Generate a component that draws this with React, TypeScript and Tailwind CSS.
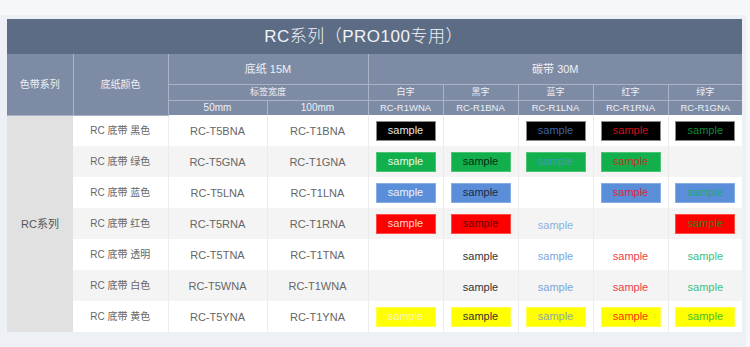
import React from 'react'

type Sample = { bg?: string; border?: string; color: string } | null

const FONT = "font-['Liberation_Sans','Noto_Sans_CJK_SC',sans-serif]"

// each row: paper colour label, 50mm code, 100mm code, 5 ribbon samples
const rows: { label: string; c50: string; c100: string; samples: Sample[] }[] = [
  {
    label: 'RC 底带 黑色',
    c50: 'RC-T5BNA',
    c100: 'RC-T1BNA',
    samples: [
      { bg: 'bg-black', border: 'border-[#8a8a8a]', color: 'text-[#e6e6e6]' },
      null,
      { bg: 'bg-black', border: 'border-[#8a8a8a]', color: 'text-[#3d62a8]' },
      { bg: 'bg-black', border: 'border-[#8a8a8a]', color: 'text-[#d0101a]' },
      { bg: 'bg-black', border: 'border-[#8a8a8a]', color: 'text-[#0c8a3a]' },
    ],
  },
  {
    label: 'RC 底带 绿色',
    c50: 'RC-T5GNA',
    c100: 'RC-T1GNA',
    samples: [
      { bg: 'bg-[#12b04c]', border: 'border-[#4cc478]', color: 'text-[#e8f6ec]' },
      { bg: 'bg-[#12b04c]', border: 'border-[#4cc478]', color: 'text-[#0a2a14]' },
      { bg: 'bg-[#12b04c]', border: 'border-[#4cc478]', color: 'text-[#3a9ac4]' },
      { bg: 'bg-[#12b04c]', border: 'border-[#4cc478]', color: 'text-[#c8302a]' },
      null,
    ],
  },
  {
    label: 'RC 底带 蓝色',
    c50: 'RC-T5LNA',
    c100: 'RC-T1LNA',
    samples: [
      { bg: 'bg-[#5b8ed8]', border: 'border-[#86aee4]', color: 'text-[#eef2fa]' },
      { bg: 'bg-[#5b8ed8]', border: 'border-[#86aee4]', color: 'text-[#1a2a48]' },
      null,
      { bg: 'bg-[#5b8ed8]', border: 'border-[#86aee4]', color: 'text-[#e0203c]' },
      { bg: 'bg-[#5b8ed8]', border: 'border-[#86aee4]', color: 'text-[#22a86a]' },
    ],
  },
  {
    label: 'RC 底带 红色',
    c50: 'RC-T5RNA',
    c100: 'RC-T1RNA',
    samples: [
      { bg: 'bg-[#ff0000]', border: 'border-[#ff4a4a]', color: 'text-[#ffd4d4]' },
      { bg: 'bg-[#ff0000]', border: 'border-[#ff4a4a]', color: 'text-[#6a0000]' },
      { color: 'text-[#8eb0e0]' },
      null,
      { bg: 'bg-[#ff0000]', border: 'border-[#ff4a4a]', color: 'text-[#3a7a1c]' },
    ],
  },
  {
    label: 'RC 底带 透明',
    c50: 'RC-T5TNA',
    c100: 'RC-T1TNA',
    samples: [
      null,
      { color: 'text-[#333333]' },
      { color: 'text-[#7ba5dc]' },
      { color: 'text-[#f0404c]' },
      { color: 'text-[#40c080]' },
    ],
  },
  {
    label: 'RC 底带 白色',
    c50: 'RC-T5WNA',
    c100: 'RC-T1WNA',
    samples: [
      null,
      { color: 'text-[#333333]' },
      { color: 'text-[#7ba5dc]' },
      { color: 'text-[#f0404c]' },
      { color: 'text-[#40c080]' },
    ],
  },
  {
    label: 'RC 底带 黄色',
    c50: 'RC-T5YNA',
    c100: 'RC-T1YNA',
    samples: [
      { bg: 'bg-[#ffff00]', border: 'border-[#ffff4a]', color: 'text-[#f6f6c4]' },
      { bg: 'bg-[#ffff00]', border: 'border-[#ffff4a]', color: 'text-[#333333]' },
      { bg: 'bg-[#ffff00]', border: 'border-[#ffff4a]', color: 'text-[#8ea8b8]' },
      { bg: 'bg-[#ffff00]', border: 'border-[#ffff4a]', color: 'text-[#ff3300]' },
      { bg: 'bg-[#ffff00]', border: 'border-[#ffff4a]', color: 'text-[#44c028]' },
    ],
  },
]

const ribbons = [
  { name: '白字', code: 'RC-R1WNA' },
  { name: '黑字', code: 'RC-R1BNA' },
  { name: '蓝字', code: 'RC-R1LNA' },
  { name: '红字', code: 'RC-R1RNA' },
  { name: '绿字', code: 'RC-R1GNA' },
]

const SampleCell = ({ s }: { s: Sample }) => {
  if (!s) return null
  if (!s.bg) {
    return <span className={`text-[11px] ${s.color}`}>sample</span>
  }
  return (
    <div
      className={`mx-auto flex h-[20px] w-[60px] items-center justify-center border text-[11px] ${s.bg} ${s.border} ${s.color}`}
    >
      sample
    </div>
  )
}

const hd = 'border border-[#a9b3c5] text-center font-normal text-[#eef0f5]'

export default function App() {
  return (
    <div className={`h-[347px] w-[750px] bg-[#f5f7f9] pt-[15px] ${FONT}`}>
      <div className="h-[332px] w-[746px] bg-[#edf1f5] pl-[7px] pt-[4px]">
        <table className="w-[735px] table-fixed border-collapse">
          <colgroup>
            <col className="w-[66px]" />
            <col className="w-[95px]" />
            <col className="w-[99px]" />
            <col className="w-[101px]" />
            <col className="w-[75px]" />
            <col className="w-[75px]" />
            <col className="w-[75px]" />
            <col className="w-[75px]" />
            <col className="w-[74px]" />
          </colgroup>
          <thead>
            <tr>
              <th
                colSpan={9}
                className="h-[35px] bg-[#5d6c85] p-0 pr-[22px] text-center text-[17px] font-light tracking-[0.5px] text-[#f0f3f7]"
              >
                RC系列（PRO100专用）
              </th>
            </tr>
            <tr className="bg-[#7e8ba5]">
              <th rowSpan={3} className={`${hd} border-t-0 border-l-0 text-[10px]`}>
                色带系列
              </th>
              <th rowSpan={3} className={`${hd} border-t-0 text-[10px]`}>
                底纸颜色
              </th>
              <th colSpan={2} className={`${hd} h-[30px] border-t-0 text-[11px]`}>
                底纸 15M
              </th>
              <th colSpan={5} className={`${hd} border-t-0 border-r-0 text-[11px]`}>
                碳带 30M
              </th>
            </tr>
            <tr className="bg-[#7e8ba5]">
              <th colSpan={2} className={`${hd} h-[16px] p-0 text-[9px] leading-[14px]`}>
                标签宽度
              </th>
              {ribbons.map((r, i) => (
                <th
                  key={r.name}
                  className={`${hd} p-0 text-[9px] leading-[14px] ${i === 4 ? 'border-r-0' : ''}`}
                >
                  {r.name}
                </th>
              ))}
            </tr>
            <tr className="bg-[#7e8ba5]">
              <th className={`${hd} h-[15px] border-b-0 p-0 text-[10px] leading-[13px]`}>50mm</th>
              <th className={`${hd} border-b-0 p-0 text-[10px] leading-[13px]`}>100mm</th>
              {ribbons.map((r, i) => (
                <th
                  key={r.code}
                  className={`${hd} border-b-0 p-0 text-[9.5px] leading-[13px] ${i === 4 ? 'border-r-0' : ''}`}
                >
                  {r.code}
                </th>
              ))}
            </tr>
          </thead>
          <tbody>
            {rows.map((row, ri) => (
              <tr key={row.label} className={ri % 2 === 0 ? 'bg-white' : 'bg-[#f4f4f4]'}>
                {ri === 0 && (
                  <td
                    rowSpan={7}
                    className="bg-[#e1e1e1] p-0 text-center text-[11px] text-[#555]"
                  >
                    RC系列
                  </td>
                )}
                <td className="h-[31px] border-r border-[#ececec] p-0 text-center text-[10px] text-[#666]">
                  {row.label}
                </td>
                <td className="border-r border-[#ececec] p-0 pt-[2px] text-center text-[11px] text-[#666]">
                  {row.c50}
                </td>
                <td className="border-r border-[#ececec] p-0 pt-[2px] text-center text-[11px] text-[#666]">
                  {row.c100}
                </td>
                {row.samples.map((s, si) => (
                  <td
                    key={si}
                    className={`p-0 text-center ${si < 4 ? 'border-r border-[#ececec]' : ''}`}
                  >
                    <SampleCell s={s} />
                  </td>
                ))}
              </tr>
            ))}
          </tbody>
        </table>
      </div>
    </div>
  )
}
